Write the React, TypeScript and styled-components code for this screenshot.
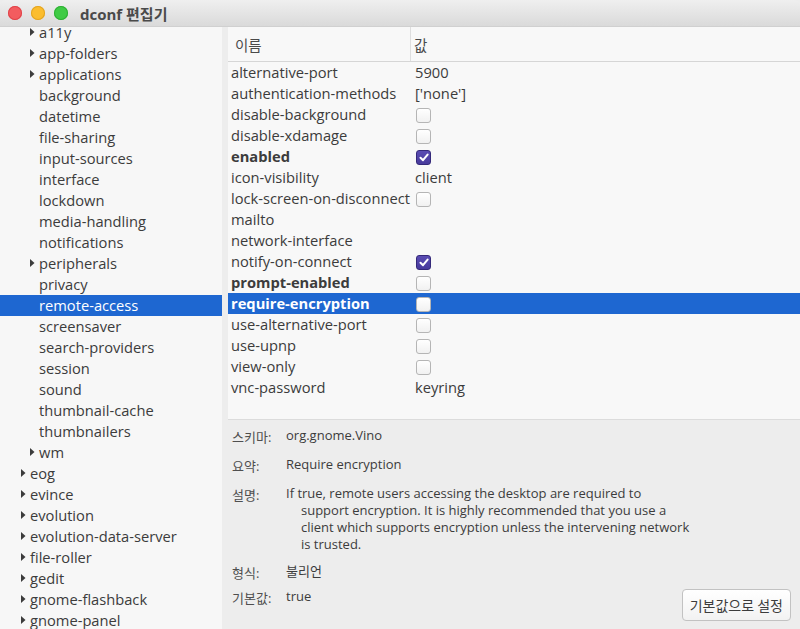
import React from 'react';
import styled, { createGlobalStyle } from 'styled-components';

const GlobalStyle = createGlobalStyle`
  html, body {
    margin: 0;
    padding: 0;
    background: #ededed;
  }
  body {
    font-family: "Open Sans", "Noto Sans CJK KR", sans-serif;
    color: #3c3c3c;
  }
`;

const Window = styled.div`
  width: 800px;
  height: 629px;
  display: flex;
  flex-direction: column;
  background: #ededed;
  border-radius: 6px 6px 0 0;
  overflow: hidden;
`;

const TitleBar = styled.div`
  height: 27px;
  flex: 0 0 27px;
  display: flex;
  align-items: center;
  gap: 9px;
  padding-left: 8px;
  background: linear-gradient(#efefef, #dadada);
  border-bottom: 1px solid #d0d0d0;
  box-sizing: border-box;
`;

const Light = styled.span<{ $color: string; $edge: string }>`
  width: 14px;
  height: 14px;
  border-radius: 50%;
  background: ${p => p.$color};
  box-shadow: inset 0 0 0 1px ${p => p.$edge};
`;

const Title = styled.div`
  margin-left: 3px;
  font-weight: bold;
  font-size: 15px;
  color: #4a4a4a;
`;

const Body = styled.div`
  flex: 1;
  display: flex;
  min-height: 0;
`;

const Sidebar = styled.div`
  width: 222px;
  flex: 0 0 222px;
  background: #f7f7f7;
  overflow: hidden;
`;

const TreeList = styled.div`
  margin-top: -5px;
`;

const TreeRow = styled.div<{ $level: number; $selected?: boolean }>`
  height: 21px;
  box-sizing: border-box;
  padding-bottom: 2px;
  display: flex;
  align-items: center;
  padding-left: ${p => (p.$level === 0 ? 21 : 30)}px;
  font-size: 14.7px;
  white-space: nowrap;
  background: ${p => (p.$selected ? '#1e67d1' : 'transparent')};
  color: ${p => (p.$selected ? '#ffffff' : '#3c3c3c')};
`;

const Expander = styled.span<{ $show: boolean }>`
  width: 9px;
  flex: 0 0 9px;
  display: flex;
  align-items: center;
  padding-top: 1px;
  visibility: ${p => (p.$show ? 'visible' : 'hidden')};
`;

const Main = styled.div`
  flex: 1;
  display: flex;
  flex-direction: column;
  padding-left: 6px;
  min-width: 0;
`;

const KeyList = styled.div`
  height: 393px;
  flex: 0 0 393px;
  background: #f8f8f8;
  border-bottom: 1px solid #dcdcdc;
  box-sizing: border-box;
`;

const Header = styled.div`
  height: 35px;
  display: grid;
  grid-template-columns: 183px 1fr;
  border-bottom: 1px solid #d6d6d6;
  box-sizing: border-box;
`;

const HeaderCell = styled.div<{ $divider?: boolean }>`
  display: flex;
  align-items: center;
  padding-left: ${p => (p.$divider ? 3 : 7)}px;
  font-size: 14.5px;
  color: #4a4a4a;
  border-right: ${p => (p.$divider ? 'none' : '1px solid #dedede')};
`;

const KeyRow = styled.div<{ $selected?: boolean; $bold?: boolean }>`
  height: 21px;
  box-sizing: border-box;
  padding-bottom: 2px;
  display: grid;
  grid-template-columns: 184px 1fr;
  align-items: center;
  font-size: 14.7px;
  font-weight: ${p => (p.$bold ? 'bold' : 'normal')};
  background: ${p => (p.$selected ? '#1e67d1' : 'transparent')};
  color: ${p => (p.$selected ? '#ffffff' : '#3c3c3c')};
`;

const KeyName = styled.span`
  padding-left: 3px;
  white-space: nowrap;
`;

const KeyValue = styled.span`
  padding-left: 3px;
  font-weight: normal;
  display: flex;
  align-items: center;
`;

const Check = styled.span<{ $checked?: boolean }>`
  margin-left: 1px;
  margin-top: 2px;
  width: 13px;
  height: 13px;
  border-radius: 3px;
  display: flex;
  align-items: center;
  justify-content: center;
  border: 1px solid ${p => (p.$checked ? '#34297a' : '#b5b5b5')};
  background: ${p => (p.$checked ? 'linear-gradient(#5a4cb3, #473a9c)' : 'linear-gradient(#ffffff, #f1f1f1)')};
`;

const Details = styled.div`
  flex: 1;
  display: flex;
  justify-content: space-between;
  align-items: flex-end;
  padding: 8px 9px 8px 4px;
`;

const InfoGrid = styled.div`
  flex: 1 1 auto;
  min-width: 0;
  display: grid;
  grid-template-columns: 54px minmax(0, 1fr);
  grid-template-rows: 29px 29px 78px 25px 17px;
  font-size: 13px;
  align-self: flex-start;
  white-space: nowrap;
`;

const Label = styled.div`
  color: #4f4f4f;
  line-height: 17px;
  margin-top: 1px;
`;

const Value = styled.div`
  color: #3c3c3c;
  line-height: 17px;
  margin-top: -1px;
`;

const Continued = styled.div`
  padding-left: 15px;
`;

const Button = styled.button`
  flex: 0 0 auto;
  height: 32px;
  padding: 0 7px;
  white-space: nowrap;
  font-family: "Noto Sans CJK KR", sans-serif;
  font-size: 14px;
  color: #3c3c3c;
  border: 1px solid #c2c2c2;
  border-radius: 4px;
  background: linear-gradient(#ffffff, #f2f2f2);
`;

const Arrow = () => (
  <svg width="5" height="8" viewBox="0 0 5 8">
    <path d="M0 0 L4.5 4 L0 8 Z" fill="#3c3c3c" />
  </svg>
);

const Tick = () => (
  <svg width="10" height="9" viewBox="0 0 10 9">
    <path d="M1.5 4.8 L4 7.2 L8.6 1.6" stroke="#fff" strokeWidth="2" fill="none" strokeLinecap="round" strokeLinejoin="round" />
  </svg>
);

type Tree = { name: string; level: number; arrow: boolean };

const tree: Tree[] = [
  ['a11y', 1, true], ['app-folders', 1, true], ['applications', 1, true],
  ['background', 1, false], ['datetime', 1, false], ['file-sharing', 1, false],
  ['input-sources', 1, false], ['interface', 1, false], ['lockdown', 1, false],
  ['media-handling', 1, false], ['notifications', 1, false], ['peripherals', 1, true],
  ['privacy', 1, false], ['remote-access', 1, false], ['screensaver', 1, false],
  ['search-providers', 1, false], ['session', 1, false], ['sound', 1, false],
  ['thumbnail-cache', 1, false], ['thumbnailers', 1, false], ['wm', 1, true],
  ['eog', 0, true], ['evince', 0, true], ['evolution', 0, true],
  ['evolution-data-server', 0, true], ['file-roller', 0, true], ['gedit', 0, true],
  ['gnome-flashback', 0, true], ['gnome-panel', 0, true],
].map(([name, level, arrow]) => ({ name: name as string, level: level as number, arrow: arrow as boolean }));

type Key = { name: string; value?: string; check?: boolean; bold?: boolean };

const keys: Key[] = [
  { name: 'alternative-port', value: '5900' },
  { name: 'authentication-methods', value: "['none']" },
  { name: 'disable-background', check: false },
  { name: 'disable-xdamage', check: false },
  { name: 'enabled', check: true, bold: true },
  { name: 'icon-visibility', value: 'client' },
  { name: 'lock-screen-on-disconnect', check: false },
  { name: 'mailto', value: '' },
  { name: 'network-interface', value: '' },
  { name: 'notify-on-connect', check: true },
  { name: 'prompt-enabled', check: false, bold: true },
  { name: 'require-encryption', check: false, bold: true },
  { name: 'use-alternative-port', check: false },
  { name: 'use-upnp', check: false },
  { name: 'view-only', check: false },
  { name: 'vnc-password', value: 'keyring' },
];

export default function App() {
  return (
    <Window>
      <GlobalStyle />
      <TitleBar>
        <Light $color="#f35c5f" $edge="#e0444a" />
        <Light $color="#fbbd2e" $edge="#e3a421" />
        <Light $color="#3fcb45" $edge="#2eaf34" />
        <Title>dconf 편집기</Title>
      </TitleBar>
      <Body>
        <Sidebar>
          <TreeList>
            {tree.map(t => (
              <TreeRow key={t.name} $level={t.level} $selected={t.name === 'remote-access'}>
                <Expander $show={t.arrow}><Arrow /></Expander>
                {t.name}
              </TreeRow>
            ))}
          </TreeList>
        </Sidebar>
        <Main>
          <KeyList>
            <Header>
              <HeaderCell>이름</HeaderCell>
              <HeaderCell $divider>값</HeaderCell>
            </Header>
            {keys.map(k => (
              <KeyRow key={k.name} $bold={k.bold} $selected={k.name === 'require-encryption'}>
                <KeyName>{k.name}</KeyName>
                <KeyValue>
                  {k.check === undefined ? k.value : <Check $checked={k.check}>{k.check && <Tick />}</Check>}
                </KeyValue>
              </KeyRow>
            ))}
          </KeyList>
          <Details>
            <InfoGrid>
              <Label>스키마:</Label>
              <Value>org.gnome.Vino</Value>
              <Label>요약:</Label>
              <Value>Require encryption</Value>
              <Label>설명:</Label>
              <Value>
                If true, remote users accessing the desktop are required to
                <Continued>
                  support encryption. It is highly recommended that you use a<br />
                  client which supports encryption unless the intervening network<br />
                  is trusted.
                </Continued>
              </Value>
              <Label>형식:</Label>
              <Value>불리언</Value>
              <Label>기본값:</Label>
              <Value>true</Value>
            </InfoGrid>
            <Button>기본값으로 설정</Button>
          </Details>
        </Main>
      </Body>
    </Window>
  );
}
